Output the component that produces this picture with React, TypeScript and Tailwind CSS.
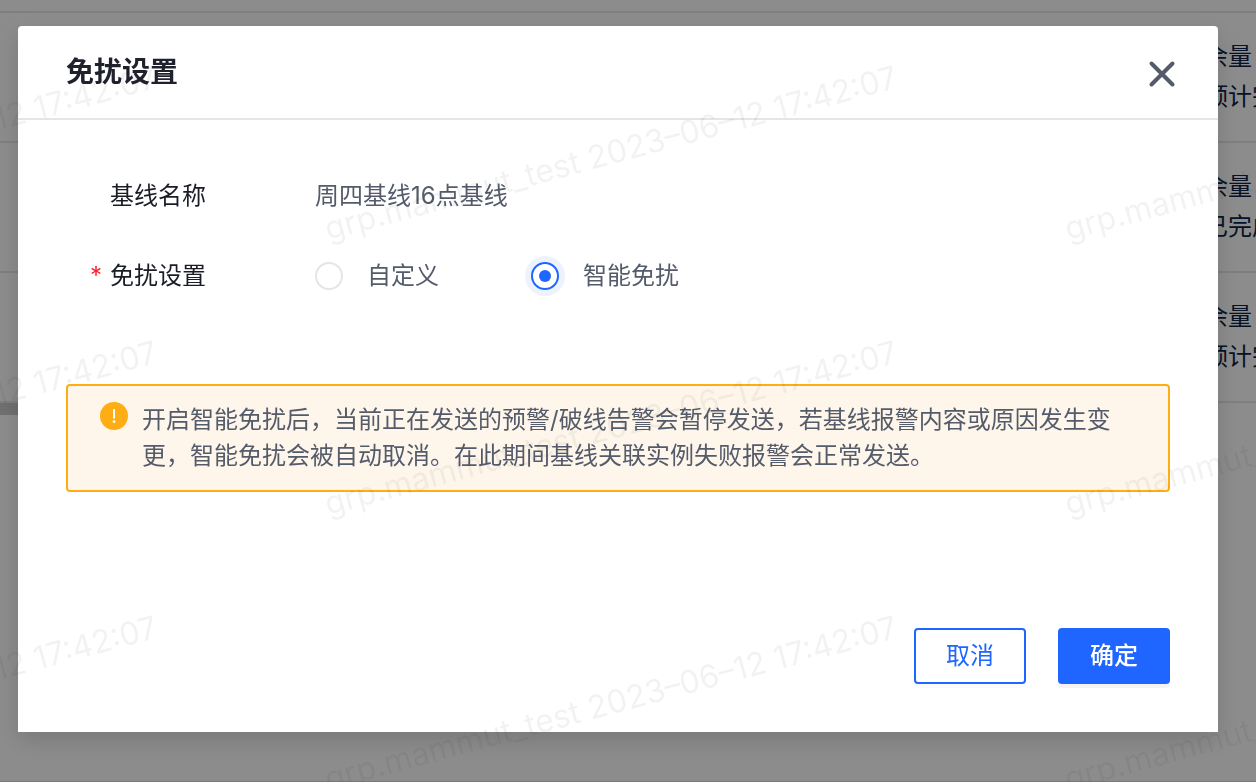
import React, { useState } from 'react';

const WATERMARK = 'grp.mammut_test 2023–06–12 17:42:07';

// Rows of the list page that stays visible around the dialog
const ROWS = [
  { id: 1, name: '余量', status: '预计完' },
  { id: 2, name: '余量', status: '已完成' },
  { id: 3, name: '余量', status: '预计完' },
];

const OPTIONS = [
  { value: 'custom', label: '自定义' },
  { value: 'smart', label: '智能免扰' },
];

function BaselineList() {
  return (
    <main className="h-screen overflow-hidden border-b border-[#dcdcdc] bg-white pt-[11px]">
      <ul className="border-t-2 border-[#e8e8e8]">
        {ROWS.map((row) => (
          <li key={row.id} className="flex justify-end border-b-2 border-[#e8e8e8] py-6">
            <div className="w-[52px] text-2xl leading-10 whitespace-nowrap text-[#0c2347]">
              <p>{row.name}</p>
              <p>{row.status}</p>
            </div>
          </li>
        ))}
      </ul>
      {/* Horizontal scroll thumb of the list */}
      <div className="h-3 w-1/2 bg-[#cbcbcb]" />
    </main>
  );
}

/** Repeated diagonal text laid over the whole screen */
function Watermark() {
  return (
    <div
      aria-hidden="true"
      className="pointer-events-none fixed inset-0 overflow-hidden"
    >
      <div className="-ml-[410px] grid auto-rows-[275px] grid-cols-[repeat(3,740px)]">
        {Array.from({ length: 9 }, (_, i) => (
          <div key={i} className="flex items-start pt-[211px]">
            <span className="origin-bottom-left -rotate-15 text-[32px] leading-9 whitespace-nowrap text-black/5">
              {WATERMARK}
            </span>
          </div>
        ))}
      </div>
    </div>
  );
}

function CloseIcon() {
  return (
    <svg className="size-7" viewBox="0 0 28 28" fill="none" stroke="currentColor">
      <path d="M3.5 3.5l21 21M24.5 3.5l-21 21" strokeWidth={4} strokeLinecap="round" />
    </svg>
  );
}

function WarningIcon() {
  return (
    <svg className="size-7 shrink-0" viewBox="0 0 28 28">
      <circle cx="14" cy="14" r="14" fill="#ffad14" />
      <path d="M13.1 7h1.9v9.5h-1.9z" fill="#fff" />
      <circle cx="14" cy="19.6" r="1.4" fill="#fff" />
    </svg>
  );
}

interface RadioOptionProps {
  value: string;
  label: string;
  checked: boolean;
  onChange: (value: string) => void;
}

function RadioOption({ value, label, checked, onChange }: RadioOptionProps) {
  return (
    <label className="flex cursor-pointer items-center gap-6 text-[#545b6a]">
      <input
        type="radio"
        name="disturb-mode"
        value={value}
        checked={checked}
        onChange={() => onChange(value)}
        className="grid size-7 appearance-none place-items-center rounded-full border-2 border-[#e4e5ea] bg-white before:size-3 before:rounded-full checked:border-[#1e66ff] checked:ring-6 checked:ring-[#edf2ff] checked:before:bg-[#1e66ff]"
      />
      {label}
    </label>
  );
}

export default function App() {
  const [mode, setMode] = useState('smart');

  return (
    <div className="font-[Inter,'Noto_Sans_CJK_SC',sans-serif]" lang="zh-CN">
      <BaselineList />

      <div className="fixed inset-0 overflow-hidden bg-black/45 pt-[26px] pr-[38px] pl-[18px]">
        <section
          role="dialog"
          aria-modal="true"
          aria-labelledby="dialog-title"
          className="rounded-t-sm bg-white text-2xl shadow-[0_8px_24px_rgba(0,0,0,0.15)]"
        >
          <header className="flex items-center justify-between border-b-2 border-[#e4e5ea] py-[26px] pr-[42px] pl-12">
            <h1 id="dialog-title" className="text-[28px] leading-10 font-bold text-[#1f222d]">
              免扰设置
            </h1>
            <button type="button" aria-label="关闭" className="pt-1 text-[#545b6a]">
              <CloseIcon />
            </button>
          </header>

          <div className="px-12 pt-14 leading-10">
            <div className="grid grid-cols-[249px_1fr]">
              <span className="pl-11 text-[#1a1c26]">基线名称</span>
              <span className="text-[#545b6a]">周四基线16点基线</span>
            </div>

            <div
              role="radiogroup"
              aria-labelledby="mode-label"
              className="mt-10 grid grid-cols-[249px_1fr]"
            >
              <span className="flex pl-6 text-[#1a1c26]">
                <span className="w-5 text-[#ff1f2d]">*</span>
                <span id="mode-label">免扰设置</span>
              </span>
              <div className="flex gap-[92px]">
                {OPTIONS.map((option) => (
                  <RadioOption
                    key={option.value}
                    value={option.value}
                    label={option.label}
                    checked={mode === option.value}
                    onChange={setMode}
                  />
                ))}
              </div>
            </div>

            <div
              role="alert"
              className="mt-[88px] flex gap-[14px] rounded-sm border-2 border-[#ffad14] bg-[#fff6eb] px-8 py-4 leading-9 text-[#545b6a]"
            >
              <WarningIcon />
              <p>
                开启智能免扰后，当前正在发送的预警/破线告警会暂停发送，若基线报警内容或原因发生变更，智能免扰会被自动取消。在此期间基线关联实例失败报警会正常发送。
              </p>
            </div>
          </div>

          <footer className="mt-[136px] flex justify-end gap-8 px-12 pb-12">
            <button
              type="button"
              className="h-14 w-28 rounded-sm border-2 border-[#1e66ff] bg-white text-[#1e66ff] shadow-[0_4px_0_rgba(0,0,0,0.016)]"
            >
              取消
            </button>
            <button
              type="button"
              className="h-14 w-28 rounded-sm bg-[#1e66ff] font-medium text-white shadow-[0_4px_0_rgba(0,0,0,0.045)]"
            >
              确定
            </button>
          </footer>
        </section>
      </div>

      <Watermark />
    </div>
  );
}
